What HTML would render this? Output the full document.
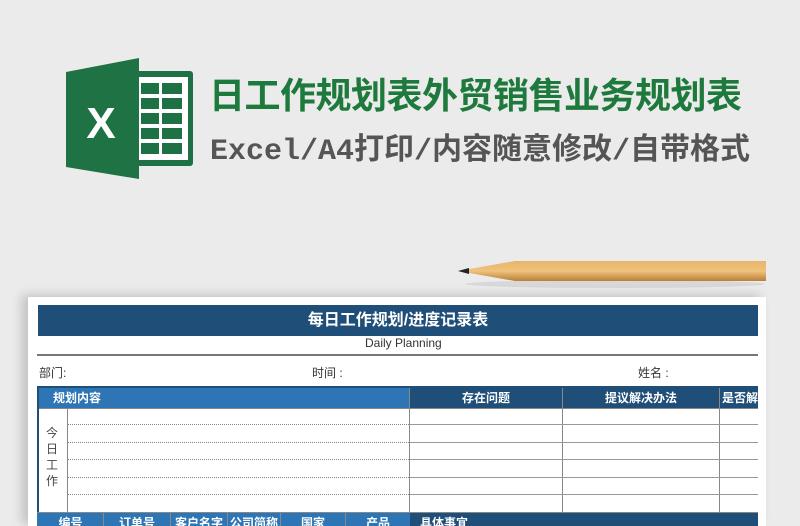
<!DOCTYPE html>
<html><head><meta charset="utf-8"><style>
*{margin:0;padding:0;box-sizing:border-box}
html,body{width:800px;height:526px;overflow:hidden}
body{background:#ebebeb;position:relative;font-family:"Liberation Sans","Noto Sans CJK SC",sans-serif}
.a{position:absolute}
.t1{left:209px;top:70px;font-size:36px;font-weight:bold;color:#1e7a3c;letter-spacing:-0.5px;white-space:nowrap;font-family:"Noto Sans CJK SC",sans-serif;line-height:46px}
.t2{left:210px;top:132px;font-size:30px;font-weight:bold;color:#555;white-space:nowrap;font-family:"Liberation Mono","Noto Sans CJK SC",monospace;line-height:40px}
.paper{left:28px;top:297px;width:738px;height:229px;background:#fff;box-shadow:-6px -2px 10px rgba(0,0,0,.18)}
.hd{left:38px;top:305px;width:720px;height:31px;background:#1f4e79;color:#fff;font-weight:bold;font-size:16px;text-align:center;line-height:31px}
.sm{font-size:12px;color:#333;white-space:nowrap}
.wt{color:#fff;font-size:12px;font-weight:bold;text-align:center;line-height:20px;white-space:nowrap;overflow:hidden}
</style></head><body>
<svg class="a" style="left:60px;top:55px" width="140" height="130" viewBox="60 55 140 130">
<rect x="130" y="71" width="63" height="95" rx="3" fill="#1e7145"/>
<rect x="137" y="77" width="51" height="83" fill="#fff"/>
<g fill="#1e7145">
<rect x="141" y="83" width="18" height="11"/><rect x="162" y="83" width="20" height="11"/>
<rect x="141" y="98" width="18" height="11"/><rect x="162" y="98" width="20" height="11"/>
<rect x="141" y="113" width="18" height="11"/><rect x="162" y="113" width="20" height="11"/>
<rect x="141" y="128" width="18" height="11"/><rect x="162" y="128" width="20" height="11"/>
<rect x="141" y="143" width="18" height="11"/><rect x="162" y="143" width="20" height="11"/>
</g>
<polygon points="66,72 139,58 139,179 66,167" fill="#1f7244"/>
<text x="101" y="138" font-family="Liberation Sans" font-weight="bold" font-size="44" fill="#fff" text-anchor="middle">X</text>
</svg>
<div class="a t1">日工作规划表外贸销售业务规划表</div>
<div class="a t2">Excel/A4打印/内容随意修改/自带格式</div>
<svg class="a" style="left:455px;top:258px" width="315" height="32">
<defs><linearGradient id="w" x1="0" y1="0" x2="0" y2="1"><stop offset="0" stop-color="#e8b46a"/><stop offset=".5" stop-color="#f0c27c"/><stop offset="1" stop-color="#b97e3a"/></linearGradient></defs>
<ellipse cx="160" cy="26" rx="150" ry="4" fill="rgba(0,0,0,.08)"/>
<polygon points="3,13 60,3 311,3 311,23 60,23" fill="url(#w)"/>
<polygon points="3,13 14,10 14,16" fill="#222"/>
</svg>
<div class="a paper"></div>
<div class="a hd">每日工作规划/进度记录表</div>
<div class="a sm" style="left:365px;top:336px">Daily Planning</div>
<div class="a" style="left:37px;top:354px;width:721px;height:2px;background:#777"></div>
<div class="a sm" style="left:39px;top:364px">部门:</div>
<div class="a sm" style="left:312px;top:364px">时间 :</div>
<div class="a sm" style="left:638px;top:364px">姓名 :</div>
<div class="a" style="left:37px;top:386px;width:721px;height:2px;background:#1f4e79"></div>
<div class="a wt" style="left:37px;top:388px;width:372px;background:#2e75b6;text-align:left;padding-left:16px">规划内容</div>
<div class="a wt" style="left:409px;top:388px;width:349px;height:20px;background:#1f4e79"></div>
<div class="a wt" style="left:410px;top:388px;width:152px">存在问题</div>
<div class="a wt" style="left:563px;top:388px;width:156px">提议解决办法</div>
<div class="a wt" style="left:720px;top:388px;width:38px;text-align:left;padding-left:2px">是否解</div>
<div class="a" style="left:37px;top:408px;width:721px;height:1px;background:#888"></div>
<div class="a" style="left:37px;top:388px;width:2px;height:138px;background:#1f4e79"></div>
<div class="a" style="left:67px;top:409px;width:1px;height:104px;background:#888"></div>
<div class="a" style="left:409px;top:388px;width:1px;height:125px;background:#888"></div>
<div class="a" style="left:562px;top:388px;width:1px;height:125px;background:#888"></div>
<div class="a" style="left:719px;top:388px;width:1px;height:125px;background:#888"></div>
<div class="a" style="left:46px;top:425px;width:14px;font-size:12px;color:#444;line-height:16px">今日工作</div>
<div class="a" style="left:68px;top:424px;width:341px;border-top:1px dotted #888"></div>
<div class="a" style="left:68px;top:442px;width:341px;border-top:1px dotted #888"></div>
<div class="a" style="left:68px;top:459px;width:341px;border-top:1px dotted #888"></div>
<div class="a" style="left:68px;top:477px;width:341px;border-top:1px dotted #888"></div>
<div class="a" style="left:68px;top:494px;width:341px;border-top:1px dotted #888"></div>
<div class="a" style="left:410px;top:424px;width:348px;height:1px;background:#999"></div>
<div class="a" style="left:410px;top:442px;width:348px;height:1px;background:#999"></div>
<div class="a" style="left:410px;top:459px;width:348px;height:1px;background:#999"></div>
<div class="a" style="left:410px;top:477px;width:348px;height:1px;background:#999"></div>
<div class="a" style="left:410px;top:494px;width:348px;height:1px;background:#999"></div>
<div class="a" style="left:37px;top:512px;width:721px;height:1px;background:#888"></div>
<div class="a" style="left:37px;top:513px;width:373px;height:13px;background:#2e75b6"></div>
<div class="a" style="left:410px;top:513px;width:348px;height:13px;background:#1f4e79"></div>
<div class="a wt" style="left:39px;top:513px;width:63px">编号</div>
<div class="a wt" style="left:103px;top:513px;width:67px;border-left:1px solid #888">订单号</div>
<div class="a wt" style="left:170px;top:513px;width:57px;border-left:1px solid #888">客户名字</div>
<div class="a wt" style="left:227px;top:513px;width:53px;border-left:1px solid #888">公司简称</div>
<div class="a wt" style="left:280px;top:513px;width:65px;border-left:1px solid #888">国家</div>
<div class="a wt" style="left:345px;top:513px;width:65px;border-left:1px solid #888">产品</div>
<div class="a wt" style="left:420px;top:513px;width:80px;text-align:left">具体事宜</div>
</body></html>
